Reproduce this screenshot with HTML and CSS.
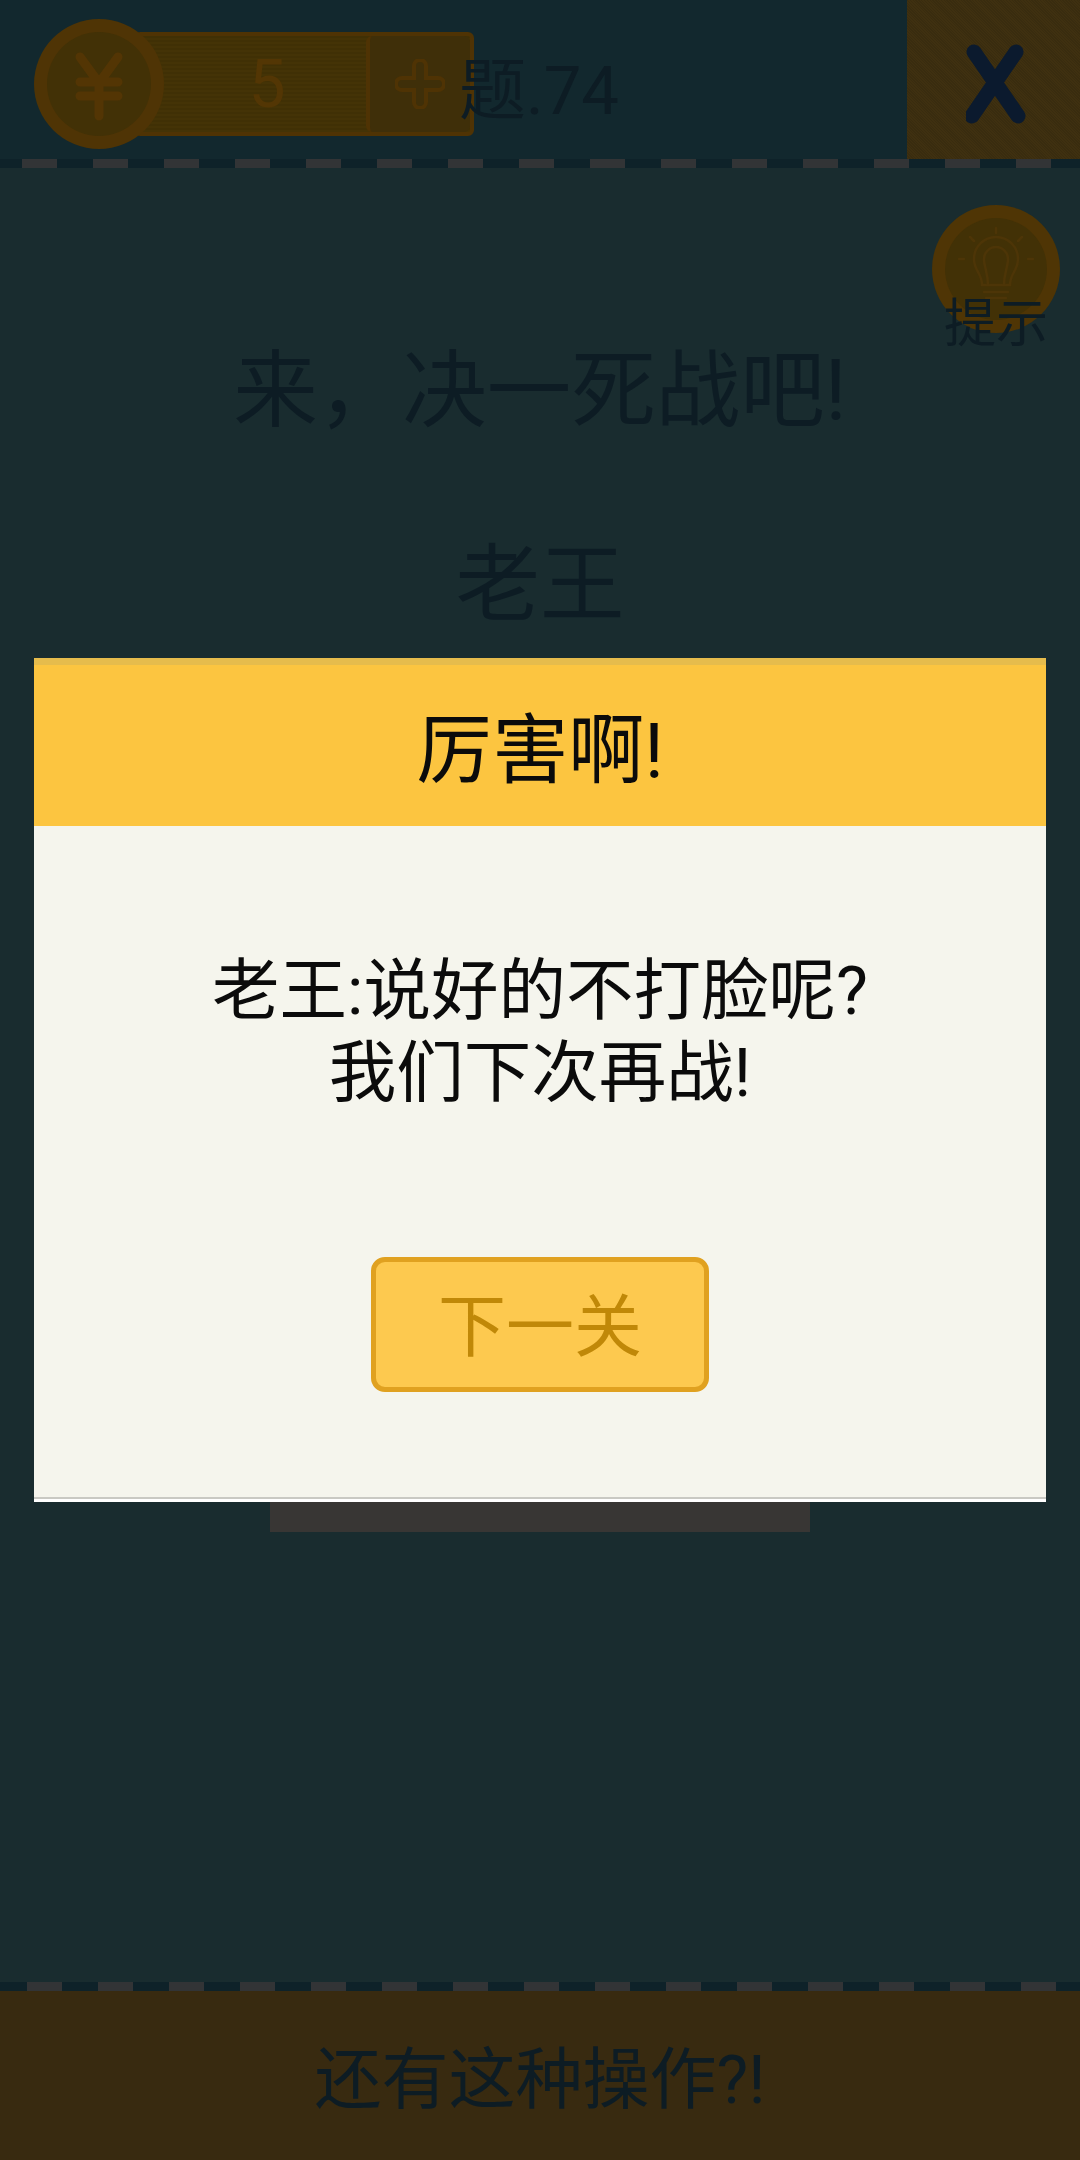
FILE: index.html
```html
<!DOCTYPE html>
<html lang="zh-CN">
<head>
  <meta charset="UTF-8">
  <title>题.74</title>
  <link rel="stylesheet" href="styles.css">
</head>
<body>
  <div class="screen">
    <div class="topbar">
      <svg class="coin" viewBox="0 0 130 130">
        <circle cx="65" cy="65" r="65" fill="#4f3405"/>
        <circle cx="65" cy="65" r="52" fill="#423106"/>
        <path d="M46 38 L65 64 L84 38 M46 63 H84 M46 77 H84 M65 64 V97" fill="none" stroke="#533504" stroke-width="9" stroke-linecap="round" stroke-linejoin="round"/>
      </svg>
      <div class="counter">
        <span class="counter-num">5</span>
        <div class="counter-add">
          <svg class="plus" viewBox="0 0 50 50">
            <path d="M19 7 a6 6 0 0 1 12 0 V19 H43 a6 6 0 0 1 0 12 H31 V43 a6 6 0 0 1 -12 0 V31 H7 a6 6 0 0 1 0 -12 H19 Z" fill="none" stroke="#4f3304" stroke-width="4"/>
          </svg>
        </div>
      </div>
      <div class="level">题.74</div>
      <div class="close-btn">
        <svg class="close-x" viewBox="0 0 60 80">
          <path d="M8 8 L52 72 M50 8 L6 72" fill="none" stroke="#0b1a2e" stroke-width="15" stroke-linecap="round"/>
        </svg>
      </div>
    </div>
    <div class="dashes"></div>

    <div class="stage">
      <div class="hint">
        <svg class="hint-coin" viewBox="0 0 128 128">
          <circle cx="64" cy="64" r="64" fill="#4f3505"/>
          <circle cx="64" cy="64" r="51" fill="#423106"/>
          <g fill="none" stroke="#4d3507" stroke-width="2.5" stroke-linecap="round">
            <path d="M50 80 C50 68 42 66 42 54 A22 22 0 0 1 86 54 C86 66 78 68 78 80 Z"/>
            <path d="M56 80 C56 68 52 62 52 54 A12 12 0 0 1 76 54 C76 62 72 68 72 80"/>
            <path d="M52 87 H76 M54 93 H74"/>
            <path d="M64 23 V28 M38 32 L42 36 M90 32 L86 36 M32 54 H27 M96 54 H101"/>
          </g>
        </svg>
        <span class="hint-label">提示</span>
      </div>
      <p class="question">来，决一死战吧!</p>
      <p class="question">老王</p>
    </div>

    <div class="dashes dashes-low"></div>
    <div class="bottombar">还有这种操作?!</div>

    <div class="dialog-wrap">
      <div class="dialog">
        <div class="dialog-head">厉害啊!</div>
        <div class="dialog-body">
          <p class="dialog-text">老王:说好的不打脸呢?<br>我们下次再战!</p>
          <div class="next-btn">下一关</div>
        </div>
      </div>
      <div class="dialog-under"></div>
    </div>
  </div>
</body>
</html>
```

FILE: styles.css
```css
html, body {
  margin: 0;
  padding: 0;
}
body {
  font-family: Roboto, "Noto Sans CJK SC", sans-serif;
  background: #192c2f;
}
p {
  margin: 0;
}
.screen {
  position: relative;
  width: 1080px;
  height: 2160px;
  display: flex;
  flex-direction: column;
  overflow: hidden;
  color: #0d1c24;
}

/* top bar */
.topbar {
  height: 159px;
  box-sizing: border-box;
  flex: none;
  display: flex;
  align-items: center;
  padding: 9px 0 0 34px;
  background: #12282e;
}
.coin {
  width: 130px;
  height: 130px;
  flex: none;
  position: relative;
  z-index: 1;
}
.counter {
  width: 340px;
  height: 104px;
  box-sizing: border-box;
  flex: none;
  margin-left: -30px;
  display: flex;
  border: 4px solid #4f3304;
  border-radius: 6px;
  background: repeating-linear-gradient(#403005 0 2px, #443306 2px 4px);
}
.counter-num {
  flex: 1;
  padding-left: 30px;
  text-align: center;
  font-size: 66px;
  line-height: 98px;
  color: #533604;
}
.counter-add {
  width: 100px;
  flex: none;
  display: flex;
  align-items: center;
  justify-content: center;
  border-left: 4px solid #4f3304;
  border-radius: 6px;
  background: #3f2f09;
}
.plus {
  width: 50px;
  height: 50px;
}
.level {
  margin-left: -15px;
  font-size: 67px;
  position: relative;
}
.close-btn {
  width: 173px;
  height: 159px;
  box-sizing: border-box;
  flex: none;
  margin: -9px 0 0 auto;
  padding: 8px 0 0 4px;
  display: flex;
  align-items: center;
  justify-content: center;
  background: repeating-linear-gradient(45deg, #392c0f 0 1px, #3f3010 1px 2px);
}
.close-x {
  width: 60px;
  height: 80px;
}
.dashes {
  height: 9px;
  flex: none;
  background: repeating-linear-gradient(90deg, #0e2229 0 22px, #323436 22px 57px, #0e2229 57px 71px);
  background-size: 71px 9px;
}
.dashes-low {
  background-position-x: 5px;
}

/* question area */
.stage {
  flex: 1;
  position: relative;
  padding-top: 127px;
  background: #192c2f;
}
.question {
  text-align: center;
  font-size: 84.5px;
  line-height: 194px;
}
.hint {
  position: absolute;
  top: 37px;
  right: 20px;
  width: 128px;
  height: 128px;
}
.hint-coin {
  width: 128px;
  height: 128px;
  display: block;
}
.hint-label {
  position: absolute;
  left: 12px;
  top: 90px;
  font-size: 52px;
  line-height: 60px;
  white-space: nowrap;
}

/* bottom bar */
.bottombar {
  height: 169px;
  box-sizing: border-box;
  flex: none;
  display: flex;
  align-items: center;
  justify-content: center;
  padding-bottom: 4px;
  font-size: 67px;
  background: #382a10;
}

/* dialog */
.dialog-wrap {
  position: absolute;
  left: 34px;
  top: 658px;
  width: 1012px;
  display: flex;
  flex-direction: column;
  align-items: center;
}
.dialog {
  width: 100%;
  height: 844px;
  display: flex;
  flex-direction: column;
  color: #0b0b0b;
}
.dialog-head {
  height: 168px;
  flex: none;
  box-sizing: border-box;
  display: flex;
  align-items: center;
  justify-content: center;
  font-size: 76px;
  padding-bottom: 4px;
  background: #fcc540;
  border-top: 7px solid #e6bc4c;
}
.dialog-body {
  flex: 1;
  display: flex;
  flex-direction: column;
  align-items: center;
  padding-top: 124px;
  background: #f5f5ed;
  border-bottom: 3px solid #ffffff;
  box-shadow: inset 0 -2px 0 #c9c9c3;
}
.dialog-text {
  text-align: center;
  font-size: 67.5px;
  line-height: 82px;
}
.next-btn {
  width: 338px;
  height: 135px;
  box-sizing: border-box;
  margin-top: 143px;
  padding-bottom: 6px;
  display: flex;
  align-items: center;
  justify-content: center;
  font-size: 68px;
  color: #c08808;
  background: #fdc94f;
  border: 5px solid #e0a120;
  border-radius: 14px;
}
.dialog-under {
  width: 540px;
  height: 30px;
  background: #383634;
}
```
